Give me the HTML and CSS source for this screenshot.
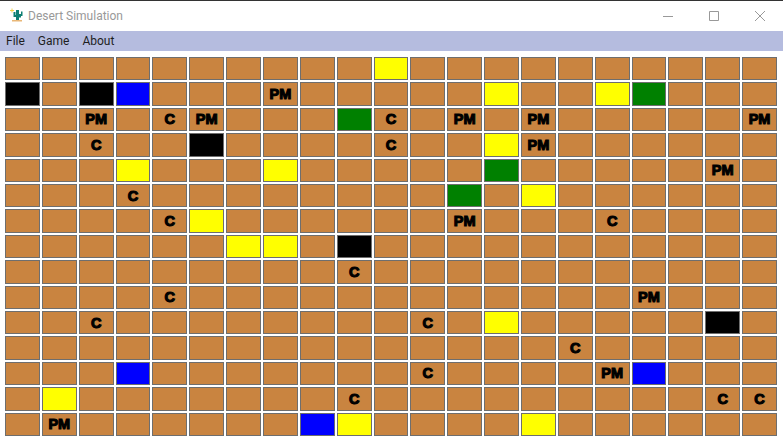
FILE: index.html
```html
<!DOCTYPE html>
<html lang="en">
<head>
<meta charset="utf-8">
<title>Desert Simulation</title>
<link rel="stylesheet" href="styles.css">
</head>
<body>
<div class="window">
<header class="titlebar">
<svg class="app-icon" width="16" height="16" viewBox="0 0 16 16"><path d="M1 2.500h4M3 0.500v4" stroke="#f2d24a" stroke-width="1" fill="none"/><path d="M7 2h3v10H7z M4.500 4h2v3h1v2h-3z M10 6h2V3.500h1.500V8H12v1.500h-2z" fill="#0f8074"/><path d="M3 12h10v1.500H3z" fill="#e9b777"/></svg>
<span class="title">Desert Simulation</span>
<div class="controls">
<svg class="ctl" width="12" height="12" viewBox="0 0 12 12"><path d="M1 6.500h10" stroke="#999" fill="none"/></svg>
<svg class="ctl" width="12" height="12" viewBox="0 0 12 12"><path d="M1.500 1.500h9v9h-9z" stroke="#999" fill="none"/></svg>
<svg class="ctl" width="12" height="12" viewBox="0 0 12 12"><path d="M1 1l10 10M11 1L1 11" stroke="#999" fill="none"/></svg>
</div>
</header>
<nav class="menubar"><span>File</span><span>Game</span><span>About</span></nav>
<main class="board">
<div class="c"></div><div class="c"></div><div class="c"></div><div class="c"></div><div class="c"></div><div class="c"></div><div class="c"></div><div class="c"></div><div class="c"></div><div class="c"></div><div class="c y"></div><div class="c"></div><div class="c"></div><div class="c"></div><div class="c"></div><div class="c"></div><div class="c"></div><div class="c"></div><div class="c"></div><div class="c"></div><div class="c"></div>
<div class="c k"></div><div class="c"></div><div class="c k"></div><div class="c b"></div><div class="c"></div><div class="c"></div><div class="c"></div><div class="c">PM</div><div class="c"></div><div class="c"></div><div class="c"></div><div class="c"></div><div class="c"></div><div class="c y"></div><div class="c"></div><div class="c"></div><div class="c y"></div><div class="c g"></div><div class="c"></div><div class="c"></div><div class="c"></div>
<div class="c"></div><div class="c"></div><div class="c">PM</div><div class="c"></div><div class="c">C</div><div class="c">PM</div><div class="c"></div><div class="c"></div><div class="c"></div><div class="c g"></div><div class="c">C</div><div class="c"></div><div class="c">PM</div><div class="c"></div><div class="c">PM</div><div class="c"></div><div class="c"></div><div class="c"></div><div class="c"></div><div class="c"></div><div class="c">PM</div>
<div class="c"></div><div class="c"></div><div class="c">C</div><div class="c"></div><div class="c"></div><div class="c k"></div><div class="c"></div><div class="c"></div><div class="c"></div><div class="c"></div><div class="c">C</div><div class="c"></div><div class="c"></div><div class="c y"></div><div class="c">PM</div><div class="c"></div><div class="c"></div><div class="c"></div><div class="c"></div><div class="c"></div><div class="c"></div>
<div class="c"></div><div class="c"></div><div class="c"></div><div class="c y"></div><div class="c"></div><div class="c"></div><div class="c"></div><div class="c y"></div><div class="c"></div><div class="c"></div><div class="c"></div><div class="c"></div><div class="c"></div><div class="c g"></div><div class="c"></div><div class="c"></div><div class="c"></div><div class="c"></div><div class="c"></div><div class="c">PM</div><div class="c"></div>
<div class="c"></div><div class="c"></div><div class="c"></div><div class="c">C</div><div class="c"></div><div class="c"></div><div class="c"></div><div class="c"></div><div class="c"></div><div class="c"></div><div class="c"></div><div class="c"></div><div class="c g"></div><div class="c"></div><div class="c y"></div><div class="c"></div><div class="c"></div><div class="c"></div><div class="c"></div><div class="c"></div><div class="c"></div>
<div class="c"></div><div class="c"></div><div class="c"></div><div class="c"></div><div class="c">C</div><div class="c y"></div><div class="c"></div><div class="c"></div><div class="c"></div><div class="c"></div><div class="c"></div><div class="c"></div><div class="c">PM</div><div class="c"></div><div class="c"></div><div class="c"></div><div class="c">C</div><div class="c"></div><div class="c"></div><div class="c"></div><div class="c"></div>
<div class="c"></div><div class="c"></div><div class="c"></div><div class="c"></div><div class="c"></div><div class="c"></div><div class="c y"></div><div class="c y"></div><div class="c"></div><div class="c k"></div><div class="c"></div><div class="c"></div><div class="c"></div><div class="c"></div><div class="c"></div><div class="c"></div><div class="c"></div><div class="c"></div><div class="c"></div><div class="c"></div><div class="c"></div>
<div class="c"></div><div class="c"></div><div class="c"></div><div class="c"></div><div class="c"></div><div class="c"></div><div class="c"></div><div class="c"></div><div class="c"></div><div class="c">C</div><div class="c"></div><div class="c"></div><div class="c"></div><div class="c"></div><div class="c"></div><div class="c"></div><div class="c"></div><div class="c"></div><div class="c"></div><div class="c"></div><div class="c"></div>
<div class="c"></div><div class="c"></div><div class="c"></div><div class="c"></div><div class="c">C</div><div class="c"></div><div class="c"></div><div class="c"></div><div class="c"></div><div class="c"></div><div class="c"></div><div class="c"></div><div class="c"></div><div class="c"></div><div class="c"></div><div class="c"></div><div class="c"></div><div class="c">PM</div><div class="c"></div><div class="c"></div><div class="c"></div>
<div class="c"></div><div class="c"></div><div class="c">C</div><div class="c"></div><div class="c"></div><div class="c"></div><div class="c"></div><div class="c"></div><div class="c"></div><div class="c"></div><div class="c"></div><div class="c">C</div><div class="c"></div><div class="c y"></div><div class="c"></div><div class="c"></div><div class="c"></div><div class="c"></div><div class="c"></div><div class="c k"></div><div class="c"></div>
<div class="c"></div><div class="c"></div><div class="c"></div><div class="c"></div><div class="c"></div><div class="c"></div><div class="c"></div><div class="c"></div><div class="c"></div><div class="c"></div><div class="c"></div><div class="c"></div><div class="c"></div><div class="c"></div><div class="c"></div><div class="c">C</div><div class="c"></div><div class="c"></div><div class="c"></div><div class="c"></div><div class="c"></div>
<div class="c"></div><div class="c"></div><div class="c"></div><div class="c b"></div><div class="c"></div><div class="c"></div><div class="c"></div><div class="c"></div><div class="c"></div><div class="c"></div><div class="c"></div><div class="c">C</div><div class="c"></div><div class="c"></div><div class="c"></div><div class="c"></div><div class="c">PM</div><div class="c b"></div><div class="c"></div><div class="c"></div><div class="c"></div>
<div class="c"></div><div class="c y"></div><div class="c"></div><div class="c"></div><div class="c"></div><div class="c"></div><div class="c"></div><div class="c"></div><div class="c"></div><div class="c">C</div><div class="c"></div><div class="c"></div><div class="c"></div><div class="c"></div><div class="c"></div><div class="c"></div><div class="c"></div><div class="c"></div><div class="c"></div><div class="c">C</div><div class="c">C</div>
<div class="c"></div><div class="c">PM</div><div class="c"></div><div class="c"></div><div class="c"></div><div class="c"></div><div class="c"></div><div class="c"></div><div class="c b"></div><div class="c y"></div><div class="c"></div><div class="c"></div><div class="c"></div><div class="c"></div><div class="c y"></div><div class="c"></div><div class="c"></div><div class="c"></div><div class="c"></div><div class="c"></div><div class="c"></div>
</main>
</div>
</body>
</html>
```
FILE: styles.css
```css
* { box-sizing: border-box; }
html, body { margin: 0; height: 100%; background: #fff; }
.window { width: 783px; height: 441px; border-top: 1px solid #333; display: flex; flex-direction: column; overflow: hidden; }
.titlebar { height: 30px; display: flex; align-items: center; padding-left: 9px; background: #fff; }
.app-icon { margin-right: 3px; }
.title { font: 12px Roboto, "Noto Sans", sans-serif; color: #999; }
.controls { margin-left: auto; display: flex; }
.ctl { margin-right: 34px; }
.ctl:last-child { margin-right: 17px; }
.menubar { height: 20px; background: #b5bcdf; display: flex; align-items: center; gap: 13px; padding-left: 6px; font: 12px Roboto, "Noto Sans", sans-serif; color: #1e1e1e; }
.board { width: 772px; height: 379px; margin: 6px 0 0 5px; display: grid; grid-template-columns: repeat(21, 1fr); grid-template-rows: repeat(15, 1fr); gap: 2px; }
.c { border: 1px solid #6e6e6e; background: #c98440; display: flex; align-items: center; justify-content: center; font: bold 14.5px "Liberation Sans", sans-serif; color: #000; -webkit-text-stroke: 1.1px #000; min-width: 0; min-height: 0; overflow: hidden; }
.y { background: #ff0; }
.k { background: #000; }
.b { background: #00f; }
.g { background: #008000; }
```
